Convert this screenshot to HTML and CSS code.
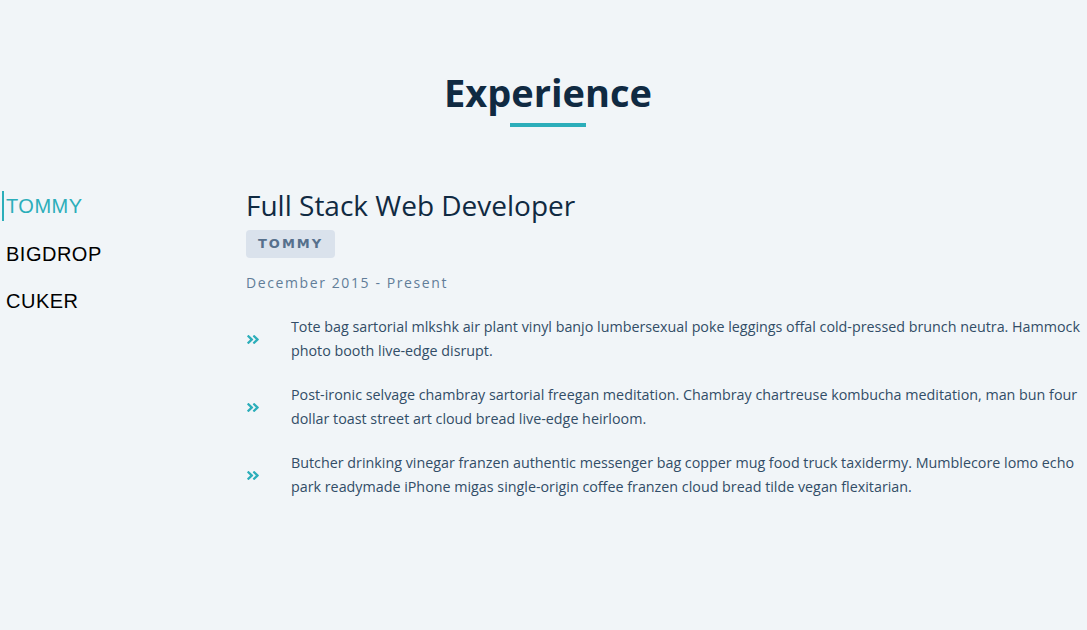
FILE: index.html
```html
<!DOCTYPE html>
<html lang="en">
<head>
<meta charset="utf-8">
<title>Experience</title>
<link rel="stylesheet" href="styles.css">
</head>
<body>
<section class="section">
  <div class="title">
    <h2>Experience</h2>
    <div class="underline"></div>
  </div>
  <div class="jobs">
    <div class="btn-container">
      <button class="job-btn active">Tommy</button>
      <button class="job-btn">Bigdrop</button>
      <button class="job-btn">Cuker</button>
    </div>
    <article class="job-info">
      <h3>Full Stack Web Developer</h3>
      <h4 class="company">Tommy</h4>
      <p class="job-date">December 2015 - Present</p>
      <div class="job-desc">
        <svg class="job-icon" viewBox="22 94 404 324" width="12" height="9" preserveAspectRatio="none"><path d="M224.3 273l-136 136c-9.4 9.4-24.6 9.4-33.9 0l-22.6-22.6c-9.4-9.4-9.4-24.6 0-33.9l96.4-96.4-96.4-96.4c-9.4-9.4-9.4-24.6 0-33.9L54.3 103c9.4-9.4 24.6-9.4 33.9 0l136 136c9.5 9.4 9.5 24.6.1 34zm192-34l-136-136c-9.4-9.4-24.6-9.4-33.9 0l-22.6 22.6c-9.4 9.4-9.4 24.6 0 33.9l96.4 96.4-96.4 96.4c-9.4 9.4-9.4 24.6 0 33.9l22.6 22.6c9.4 9.4 24.6 9.4 33.9 0l136-136c9.4-9.2 9.4-24.4 0-33.8z"/></svg>
        <p>Tote bag sartorial mlkshk air plant vinyl banjo lumbersexual poke leggings offal cold-pressed brunch neutra. Hammock photo booth live-edge disrupt.</p>
      </div>
      <div class="job-desc">
        <svg class="job-icon" viewBox="22 94 404 324" width="12" height="9" preserveAspectRatio="none"><path d="M224.3 273l-136 136c-9.4 9.4-24.6 9.4-33.9 0l-22.6-22.6c-9.4-9.4-9.4-24.6 0-33.9l96.4-96.4-96.4-96.4c-9.4-9.4-9.4-24.6 0-33.9L54.3 103c9.4-9.4 24.6-9.4 33.9 0l136 136c9.5 9.4 9.5 24.6.1 34zm192-34l-136-136c-9.4-9.4-24.6-9.4-33.9 0l-22.6 22.6c-9.4 9.4-9.4 24.6 0 33.9l96.4 96.4-96.4 96.4c-9.4 9.4-9.4 24.6 0 33.9l22.6 22.6c9.4 9.4 24.6 9.4 33.9 0l136-136c9.4-9.2 9.4-24.4 0-33.8z"/></svg>
        <p>Post-ironic selvage chambray sartorial freegan meditation. Chambray chartreuse kombucha meditation, man bun four dollar toast street art cloud bread live-edge heirloom.</p>
      </div>
      <div class="job-desc">
        <svg class="job-icon" viewBox="22 94 404 324" width="12" height="9" preserveAspectRatio="none"><path d="M224.3 273l-136 136c-9.4 9.4-24.6 9.4-33.9 0l-22.6-22.6c-9.4-9.4-9.4-24.6 0-33.9l96.4-96.4-96.4-96.4c-9.4-9.4-9.4-24.6 0-33.9L54.3 103c9.4-9.4 24.6-9.4 33.9 0l136 136c9.5 9.4 9.5 24.6.1 34zm192-34l-136-136c-9.4-9.4-24.6-9.4-33.9 0l-22.6 22.6c-9.4 9.4-9.4 24.6 0 33.9l96.4 96.4-96.4 96.4c-9.4 9.4-9.4 24.6 0 33.9l22.6 22.6c9.4 9.4 24.6 9.4 33.9 0l136-136c9.4-9.2 9.4-24.4 0-33.8z"/></svg>
        <p>Butcher drinking vinegar franzen authentic messenger bag copper mug food truck taxidermy. Mumblecore lomo echo park readymade iPhone migas single-origin coffee franzen cloud bread tilde vegan flexitarian.</p>
      </div>
    </article>
  </div>
</section>
</body>
</html>
```
FILE: styles.css
```css
* { box-sizing: border-box; margin: 0; padding: 0; }
body {
  background: #f1f5f8;
  font-family: "Open Sans", "Noto Sans", sans-serif;
  color: #102a42;
}
.section { padding-top: 67px; }
.title { text-align: center; padding-left: 9px; }
.title h2 {
  font-size: 38px;
  line-height: 50px;
  font-weight: 700;
  letter-spacing: 0;
  color: #102a42;
}
.underline {
  width: 76px;
  height: 4px;
  margin: 6px auto 0;
  background: #2caeba;
}
.jobs {
  display: grid;
  grid-template-columns: 244px 1fr;
  margin-top: 64px;
  padding-left: 2px;
}
.btn-container {
  display: flex;
  flex-direction: column;
  align-items: flex-start;
}
.job-btn {
  background: transparent;
  border: none;
  font-family: "Liberation Sans", Arial, sans-serif;
  font-size: 20px;
  line-height: 20px;
  letter-spacing: 0.5px;
  text-transform: uppercase;
  color: #000;
  padding: 5px 0 5px 4px;
  margin-bottom: 17.5px;
  cursor: pointer;
}
.job-btn.active {
  color: #2caeba;
  box-shadow: -2px 0 #2caeba;
  margin-left: 2px;
  padding-left: 2px;
}
.job-info h3 {
  font-size: 28px;
  line-height: 34px;
  font-weight: 400;
  letter-spacing: 0;
  color: #102a42;
  margin-top: -3px;
}
.company {
  display: inline-block;
  margin-top: 8px;
  padding: 0 12px;
  height: 28px;
  line-height: 28px;
  background: #dae2ec;
  color: #56708c;
  border-radius: 4px;
  font-family: "DejaVu Sans", sans-serif;
  font-size: 13px;
  font-weight: 700;
  letter-spacing: 2px;
  text-transform: uppercase;
}
.job-date {
  margin-top: 14px;
  font-size: 14px;
  line-height: 22px;
  letter-spacing: 1.6px;
  color: #617d98;
}
.job-desc {
  display: grid;
  grid-template-columns: auto 1fr;
  column-gap: 32px;
  align-items: center;
  margin-bottom: 20px;
}
.job-desc:first-of-type { margin-top: 21px; }
.job-icon { fill: #2caeba; margin-left: 1px; }
.job-desc p {
  font-size: 14.3px;
  line-height: 24px;
  color: #324d67;
}
```
